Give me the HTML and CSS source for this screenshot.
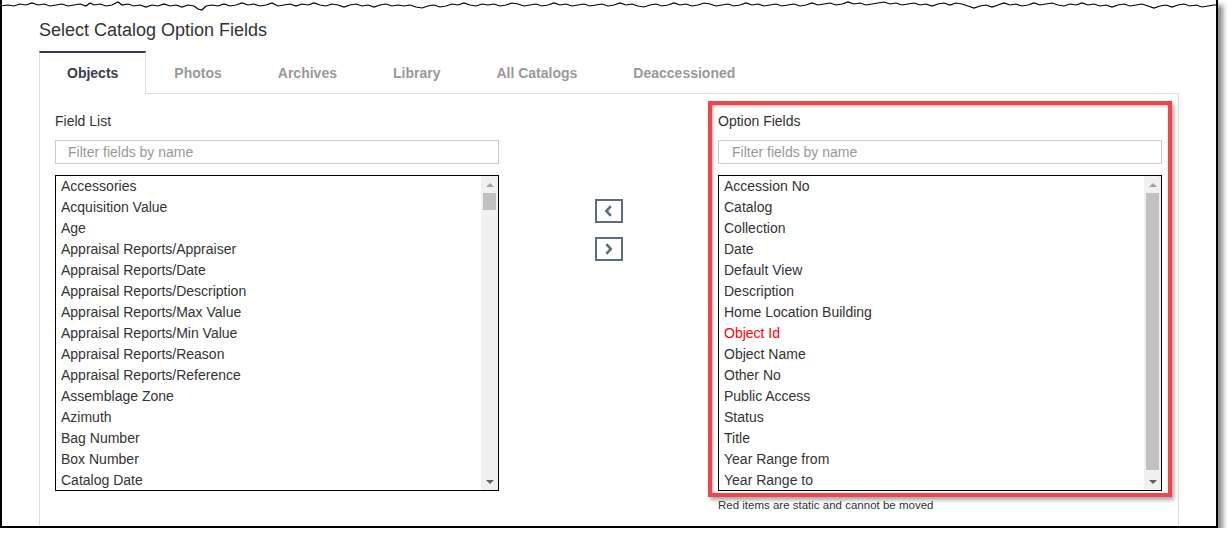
FILE: index.html
```html
<!DOCTYPE html>
<html lang="en">
<head>
<meta charset="utf-8">
<title>Select Catalog Option Fields</title>
<link rel="stylesheet" href="styles.css">
</head>
<body>
<div class="sheet">
  <svg class="torn" width="1222" height="14" viewBox="0 0 1222 14" aria-hidden="true">
    <polygon class="torn-fill" points="0,0 1222,0 1222,6 1218,5 1214,5 1208,6 1202,7 1196,5 1190,6 1184,4 1178,5 1172,7 1166,5 1160,6 1154,8 1148,6 1142,4 1136,5 1130,6 1124,4 1118,5 1112,7 1106,5 1100,6 1094,4 1088,5 1082,3 1076,5 1070,4 1064,6 1058,5 1052,3 1046,4 1040,5 1034,3 1028,5 1022,6 1016,4 1010,5 1004,3 998,5 992,7 986,5 980,6 974,8 968,6 962,4 956,3 950,5 944,3 938,4 932,6 926,4 920,5 914,3 908,4 902,5 896,3 890,4 884,2 878,3 872,4 866,5 860,3 854,4 848,2 842,4 836,5 830,3 824,4 818,5 812,3 806,5 800,6 794,4 788,5 782,6 776,4 770,5 764,6 758,4 752,5 746,3 740,5 734,6 728,4 722,5 716,6 710,4 704,3 698,5 692,6 686,4 680,5 674,3 668,5 662,6 656,4 650,5 644,7 638,6 632,4 626,5 620,3 614,5 608,6 602,4 596,5 590,6 584,4 578,5 572,6 566,4 560,5 554,3 548,5 542,6 536,4 530,5 524,6 518,4 512,3 506,5 500,6 494,4 488,5 482,4 476,6 470,5 464,3 458,5 452,4 446,6 440,7 434,5 428,6 422,8 416,7 410,5 404,6 398,5 392,6 386,4 380,5 374,7 368,5 362,6 356,4 350,5 344,7 338,5 332,4 326,6 320,5 314,3 308,5 302,4 296,6 290,4 284,5 278,6 272,3 266,5 260,6 254,4 248,5 242,3 236,5 230,6 224,4 218,6 212,5 206,6 202,10 198,9 194,6 188,5 182,7 176,5 170,6 164,4 158,6 152,5 146,7 140,5 134,6 128,4 122,5 118,2 112,5 106,6 100,4 94,5 90,3 86,6 80,4 74,5 68,6 62,4 56,5 50,6 44,4 38,5 32,3 26,5 20,4 14,6 8,5 0,6"/>
    <polyline class="torn-line" points="0,6 8,5 14,6 20,4 26,5 32,3 38,5 44,4 50,6 56,5 62,4 68,6 74,5 80,4 86,6 90,3 94,5 100,4 106,6 112,5 118,2 122,5 128,4 134,6 140,5 146,7 152,5 158,6 164,4 170,6 176,5 182,7 188,5 194,6 198,9 202,10 206,6 212,5 218,6 224,4 230,6 236,5 242,3 248,5 254,4 260,6 266,5 272,3 278,6 284,5 290,4 296,6 302,4 308,5 314,3 320,5 326,6 332,4 338,5 344,7 350,5 356,4 362,6 368,5 374,7 380,5 386,4 392,6 398,5 404,6 410,5 416,7 422,8 428,6 434,5 440,7 446,6 452,4 458,5 464,3 470,5 476,6 482,4 488,5 494,4 500,6 506,5 512,3 518,4 524,6 530,5 536,4 542,6 548,5 554,3 560,5 566,4 572,6 578,5 584,4 590,6 596,5 602,4 608,6 614,5 620,3 626,5 632,4 638,6 644,7 650,5 656,4 662,6 668,5 674,3 680,5 686,4 692,6 698,5 704,3 710,4 716,6 722,5 728,4 734,6 740,5 746,3 752,5 758,4 764,6 770,5 776,4 782,6 788,5 794,4 800,6 806,5 812,3 818,5 824,4 830,3 836,5 842,4 848,2 854,4 860,3 866,5 872,4 878,3 884,2 890,4 896,3 902,5 908,4 914,3 920,5 926,4 932,6 938,4 944,3 950,5 956,3 962,4 968,6 974,8 980,6 986,5 992,7 998,5 1004,3 1010,5 1016,4 1022,6 1028,5 1034,3 1040,5 1046,4 1052,3 1058,5 1064,6 1070,4 1076,5 1082,3 1088,5 1094,4 1100,6 1106,5 1112,7 1118,5 1124,4 1130,6 1136,5 1142,4 1148,6 1154,8 1160,6 1166,5 1172,7 1178,5 1184,4 1190,6 1196,5 1202,7 1208,6 1214,5 1218,5"/>
  </svg>

  <h1 class="title">Select Catalog Option Fields</h1>

  <div class="tabset">
    <ul class="tabs">
      <li class="tab active">Objects</li>
      <li class="tab">Photos</li>
      <li class="tab">Archives</li>
      <li class="tab">Library</li>
      <li class="tab">All Catalogs</li>
      <li class="tab">Deaccessioned</li>
    </ul>

    <div class="panel">
      <div class="col">
        <div class="label">Field List</div>
        <input class="filter" type="text" placeholder="Filter fields by name">
        <div class="listbox">
          <ul class="items">
            <li>Accessories</li>
            <li>Acquisition Value</li>
            <li>Age</li>
            <li>Appraisal Reports/Appraiser</li>
            <li>Appraisal Reports/Date</li>
            <li>Appraisal Reports/Description</li>
            <li>Appraisal Reports/Max Value</li>
            <li>Appraisal Reports/Min Value</li>
            <li>Appraisal Reports/Reason</li>
            <li>Appraisal Reports/Reference</li>
            <li>Assemblage Zone</li>
            <li>Azimuth</li>
            <li>Bag Number</li>
            <li>Box Number</li>
            <li>Catalog Date</li>
          </ul>
          <div class="sbar">
            <div class="sb-btn"><span class="arrow-up dim"></span></div>
            <div class="sb-track"><div class="thumb thumb-small"></div></div>
            <div class="sb-btn"><span class="arrow-down"></span></div>
          </div>
        </div>
      </div>

      <div class="mid">
        <button class="move" type="button" aria-label="Move left">
          <svg width="9" height="12" viewBox="0 0 9 12"><path d="M6.8 1.2 L2.4 6 L6.8 10.8" /></svg>
        </button>
        <button class="move" type="button" aria-label="Move right">
          <svg width="9" height="12" viewBox="0 0 9 12"><path d="M2.4 1.2 L6.8 6 L2.4 10.8" /></svg>
        </button>
      </div>

      <div class="col col-right">
        <div class="highlight">
          <div class="label">Option Fields</div>
          <input class="filter" type="text" placeholder="Filter fields by name">
          <div class="listbox">
            <ul class="items">
              <li>Accession No</li>
              <li>Catalog</li>
              <li>Collection</li>
              <li>Date</li>
              <li>Default View</li>
              <li>Description</li>
              <li>Home Location Building</li>
              <li class="static">Object Id</li>
              <li>Object Name</li>
              <li>Other No</li>
              <li>Public Access</li>
              <li>Status</li>
              <li>Title</li>
              <li>Year Range from</li>
              <li>Year Range to</li>
            </ul>
            <div class="sbar">
              <div class="sb-btn"><span class="arrow-up dim"></span></div>
              <div class="sb-track"><div class="thumb thumb-large"></div></div>
              <div class="sb-btn"><span class="arrow-down"></span></div>
            </div>
          </div>
        </div>
        <div class="note">Red items are static and cannot be moved</div>
      </div>
    </div>
  </div>
</div>
</body>
</html>
```

FILE: styles.css
```css
html, body {
  margin: 0;
  padding: 0;
  background: #ffffff;
  overflow: hidden;
}

body {
  font-family: "Liberation Sans", Arial, sans-serif;
  color: #333333;
}

.sheet {
  position: relative;
  box-sizing: border-box;
  width: 1218px;
  height: 528px;
  border: 2px solid #000000;
  border-top: 0;
  padding: 20px 0 0 37px;
  background: #ffffff;
  box-shadow: 5px 5px 5px rgba(0, 0, 0, 0.45);
  overflow: hidden;
}

.torn {
  position: absolute;
  top: 0;
  left: -2px;
  display: block;
}

.torn-fill {
  fill: #ffffff;
}

.torn-line {
  fill: none;
  stroke: #000000;
  stroke-width: 1.2;
}

.title {
  margin: 0;
  font-size: 18px;
  line-height: 20px;
  font-weight: normal;
  color: #333333;
}

.tabset {
  width: 1140px;
  margin-top: 11px;
}

.tabs {
  display: flex;
  align-items: flex-start;
  margin: 0;
  padding: 0;
  list-style: none;
  border-bottom: 1px solid #dddddd;
  height: 42px;
}

.tab {
  padding: 10px 27px;
  border: 1px solid transparent;
  border-top: 2px solid transparent;
  border-bottom: 0;
  font-size: 14px;
  line-height: 20px;
  font-weight: bold;
  color: #999999;
}

.tab.active {
  position: relative;
  padding-bottom: 11px;
  border-color: #dddddd;
  border-top-color: #2f3466;
  background: #ffffff;
  color: #3b3d4a;
}

.panel {
  display: grid;
  grid-template-columns: 444px 1fr 444px;
  height: 440px;
  padding: 17px 16px 0 15px;
  border-left: 1px solid #dddddd;
  border-right: 1px solid #dddddd;
}

.label {
  font-size: 14px;
  line-height: 20px;
  color: #333333;
  margin-bottom: 9px;
}

.filter {
  display: block;
  box-sizing: border-box;
  width: 100%;
  height: 24px;
  margin: 0;
  padding: 0 12px;
  border: 1px solid #cccccc;
  font-family: "Liberation Sans", Arial, sans-serif;
  font-size: 14px;
  color: #333333;
  outline: none;
}

.filter::placeholder {
  color: #999999;
}

.col-right .filter {
  padding-left: 13px;
}

.listbox {
  display: flex;
  box-sizing: border-box;
  height: 316px;
  margin-top: 11px;
  border: 1px solid #000000;
}

.items {
  flex: 1;
  margin: 0;
  padding: 0 0 0 5px;
  list-style: none;
  overflow: hidden;
  font-size: 14px;
  line-height: 21px;
  color: #333333;
}

.items li {
  white-space: nowrap;
}

.items .static {
  color: #ff0000;
}

.sbar {
  display: flex;
  flex-direction: column;
  width: 17px;
  background: #f0f0f0;
}

.sb-btn {
  display: flex;
  align-items: center;
  justify-content: center;
  height: 17px;
}

.sb-track {
  flex: 1;
  display: flex;
  flex-direction: column;
}

.thumb {
  margin: 0 2px;
  background: #c1c1c1;
}

.thumb-small {
  height: 17px;
}

.thumb-large {
  height: 277px;
}

.arrow-up {
  width: 0;
  height: 0;
  border-left: 4px solid transparent;
  border-right: 4px solid transparent;
  border-bottom: 4px solid #606060;
}

.arrow-up.dim {
  border-bottom-color: #a3a3a3;
}

.arrow-down {
  width: 0;
  height: 0;
  border-left: 4px solid transparent;
  border-right: 4px solid transparent;
  border-top: 4px solid #606060;
}

.mid {
  display: flex;
  flex-direction: column;
  align-items: center;
  gap: 14px;
  padding-top: 88px;
}

.move {
  display: flex;
  align-items: center;
  justify-content: center;
  box-sizing: border-box;
  width: 28px;
  height: 24px;
  margin: 0;
  padding: 0;
  border: 2px solid #5e6d7d;
  background: #ffffff;
  cursor: pointer;
}

.move svg {
  display: block;
}

.move path {
  fill: none;
  stroke: #5e6d7d;
  stroke-width: 2.6;
}

.highlight {
  position: relative;
}

.highlight::after {
  content: "";
  position: absolute;
  top: -10px;
  left: -10px;
  right: -10px;
  bottom: -6px;
  border: 4px solid #f3444b;
  box-shadow: 2px 3px 4px rgba(0, 0, 0, 0.35), inset 1px 1px 3px rgba(0, 0, 0, 0.3);
  pointer-events: none;
}

.note {
  margin-top: 7px;
  font-size: 11.5px;
  line-height: 14px;
  color: #333333;
}
```
